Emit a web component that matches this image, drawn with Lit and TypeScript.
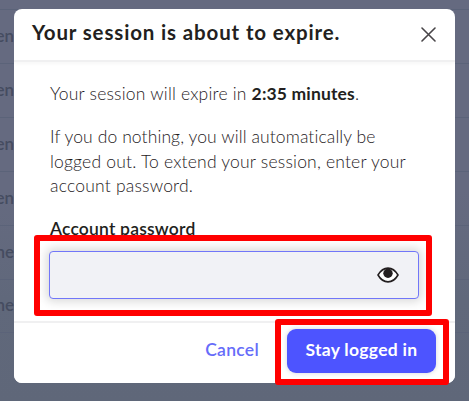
import { LitElement, html, css } from "lit";
import { customElement, state } from "lit/decorators.js";

@customElement("app-root")
export class AppRoot extends LitElement {
  @state() private rows = ["en", "en", "en", "en", "ne", "ne"];
  @state() private masked = true;

  static styles = css`
    * {
      box-sizing: border-box;
    }
    :host {
      display: grid;
      width: 469px;
      height: 401px;
      overflow: hidden;
      position: relative;
      font-family: Lato, "Open Sans", sans-serif;
      color: #231f20;
    }
    .backdrop,
    .dialog {
      grid-area: 1 / 1;
    }
    .backdrop {
      background: linear-gradient(#656a80 0, #656a80 190px, #60687b 300px, #5f6779 401px);
      padding-top: 9px;
    }
    .row {
      height: 54px;
      width: 469px;
      border-top: 1px solid #5b6379;
      display: flex;
      align-items: center;
      padding-bottom: 2px;
    }
    .row:last-child {
      border-bottom: 1px solid #5b6379;
    }
    .row span {
      width: 14px;
      display: flex;
      justify-content: flex-end;
      font-size: 17px;
      font-weight: 600;
      line-height: 24px;
      color: #454c60;
    }
    .dialog {
      margin: 9px 0 0 14px;
      width: 441px;
      height: 373.5px;
      border-radius: 8px;
      background: #fff;
      overflow: hidden;
      display: flex;
      flex-direction: column;
    }
    .header {
      height: 53px;
      flex: none;
      display: flex;
      justify-content: space-between;
      padding: 12px 19px 0 18px;
      border-bottom: 2px solid #f0f0f1;
      box-shadow: 0 2px 3px rgba(0, 0, 0, 0.03);
    }
    .title {
      margin: 0;
      font-size: 20.5px;
      line-height: 23px;
      font-weight: 700;
      letter-spacing: 0.85px;
      white-space: nowrap;
    }
    .close {
      width: 15px;
      height: 15px;
      margin-top: 6px;
    }
    .body {
      flex: 1;
      padding: 20px 35px 0 36px;
    }
    .copy {
      margin: 0 0 18.5px;
      font-size: 17.5px;
      line-height: 24.5px;
      font-weight: 300;
      color: #1f1b1e;
      letter-spacing: 0.2px;
      white-space: nowrap;
    }
    .copy span {
      display: block;
      width: max-content;
    }
    .copy .line-a {
      letter-spacing: 0.1px;
    }
    .copy b {
      color: #231f20;
      font-weight: 700;
      letter-spacing: 0.15px;
    }
    .label {
      display: block;
      width: max-content;
      font-size: 17.5px;
      line-height: 23px;
      margin-bottom: 11px;
      font-weight: 600;
      letter-spacing: 0.2px;
    }
    .field {
      margin-left: -1px;
      width: 370px;
      height: 48px;
      border: 1px solid #7176f9;
      border-radius: 4px;
      background: #f1f2f6;
      box-shadow: 0 0 10px 3px rgba(0, 0, 0, 0.14);
      display: flex;
      align-items: center;
      justify-content: flex-end;
      padding-right: 19px;
    }
    .eye {
      width: 22px;
      height: 16px;
      margin-top: -1px;
    }
    .footer {
      height: 62px;
      flex: none;
      background: #fff;
      border-top: 2px solid #f0f0f1;
      display: flex;
      justify-content: flex-end;
      align-items: center;
      padding: 0 19px 3px 0;
      gap: 28px;
      position: relative;
    }
    button {
      font: 700 17.5px/24px Lato, "Open Sans", sans-serif;
      padding: 0 0 2px;
      border: 0;
      background: none;
      white-space: nowrap;
      letter-spacing: 0.3px;
    }
    .cancel {
      color: #666cf9;
      font-weight: 600;
    }
    .primary {
      width: 149px;
      height: 44px;
      border-radius: 9px;
      color: #fff;
      background: #4d54ff;
      box-shadow: 0 0 5px rgba(60, 60, 90, 0.22);
    }
    .mark {
      position: absolute;
      border: 6px solid #f00;
      border-radius: 3px;
      pointer-events: none;
    }
    .mark-field {
      left: 34px;
      top: 235px;
      width: 398px;
      height: 81px;
    }
    .mark-button {
      left: 275px;
      top: 319px;
      width: 174px;
      height: 66px;
    }
  `;

  render() {
    return html`
      <div class="backdrop">
        ${this.rows.map((text) => html`<div class="row"><span>${text}</span></div>`)}
      </div>
      <section class="dialog" role="dialog">
        <header class="header">
          <h1 class="title">Your session is about to expire.</h1>
          <svg class="close" viewBox="0 0 15 15" fill="none" stroke="#484548" stroke-width="1.6" stroke-linecap="round">
            <path d="M1 1 14 14M14 1 1 14" />
          </svg>
        </header>
        <div class="body">
          <p class="copy"><span>Your session will expire in <b>2:35 minutes</b>.</span></p>
          <p class="copy">
            <span class="line-a">If you do nothing, you will automatically be</span>
            <span>logged out. To extend your session, enter your</span>
            <span>account password.</span>
          </p>
          <label class="label">Account password</label>
          <div class="field" @click=${() => (this.masked = !this.masked)}>
            <svg class="eye" viewBox="0 0 22 16">
              <path d="M1 8Q5 1.1 11 1.1T21 8Q17 14.9 11 14.9T1 8Z" fill="#fff" stroke="#231f20" stroke-width="1.6" stroke-linejoin="round" />
              <circle cx="11" cy="6.2" r="4.7" fill="#231f20" />
            </svg>
          </div>
        </div>
        <footer class="footer">
          <button class="cancel">Cancel</button>
          <button class="primary">Stay logged in</button>
        </footer>
      </section>
      <div class="mark mark-field"></div>
      <div class="mark mark-button"></div>
    `;
  }
}
